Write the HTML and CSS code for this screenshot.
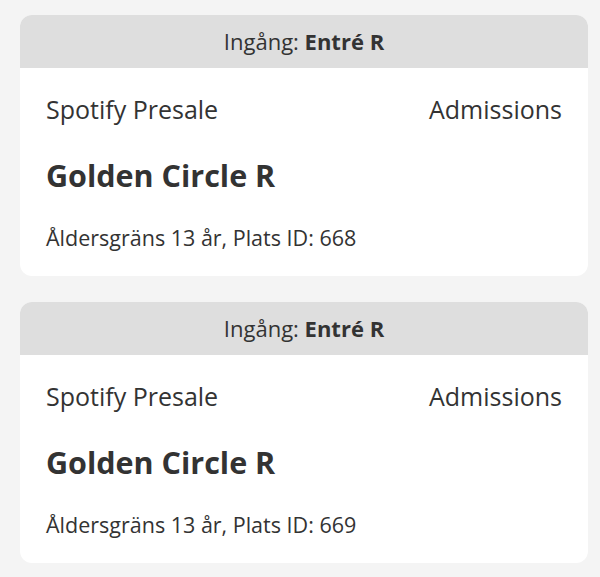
FILE: index.html
```html
<!DOCTYPE html>
<html lang="sv">
<head>
<meta charset="utf-8">
<link rel="stylesheet" href="styles.css">
</head>
<body>
<main class="list">
  <section class="ticket">
    <header class="ticket-head">Ingång: <strong>Entré R</strong></header>
    <div class="ticket-body">
      <div class="row">
        <span>Spotify Presale</span>
        <span>Admissions</span>
      </div>
      <h2 class="section">Golden Circle R</h2>
      <p class="meta">Åldersgräns 13 år, Plats ID: 668</p>
    </div>
  </section>
  <section class="ticket">
    <header class="ticket-head">Ingång: <strong>Entré R</strong></header>
    <div class="ticket-body">
      <div class="row">
        <span>Spotify Presale</span>
        <span>Admissions</span>
      </div>
      <h2 class="section">Golden Circle R</h2>
      <p class="meta">Åldersgräns 13 år, Plats ID: 669</p>
    </div>
  </section>
</main>
</body>
</html>
```

FILE: styles.css
```css
html, body {
  margin: 0;
  padding: 0;
  background: #f4f4f4;
}
body {
  font-family: "Open Sans", Lato, sans-serif;
  color: #333333;
}
.list {
  display: flex;
  flex-direction: column;
  gap: 26px;
  padding: 15px 12px 0 20px;
}
.ticket {
  background: #ffffff;
  border-radius: 12px;
  overflow: hidden;
}
.ticket-head {
  background: #dedede;
  height: 53px;
  line-height: 53px;
  text-align: center;
  font-size: 22px;
}
.ticket-head strong {
  font-weight: 700;
}
.ticket-body {
  padding: 26px 26px 26px 26px;
}
.row {
  display: flex;
  justify-content: space-between;
  font-size: 25px;
  line-height: 30px;
}
.section {
  margin: 33px 0 0 0;
  font-size: 30.5px;
  line-height: 36px;
  font-weight: 700;
}
.meta {
  margin: 33px 0 0 0;
  font-size: 21.5px;
  line-height: 24px;
}
```
